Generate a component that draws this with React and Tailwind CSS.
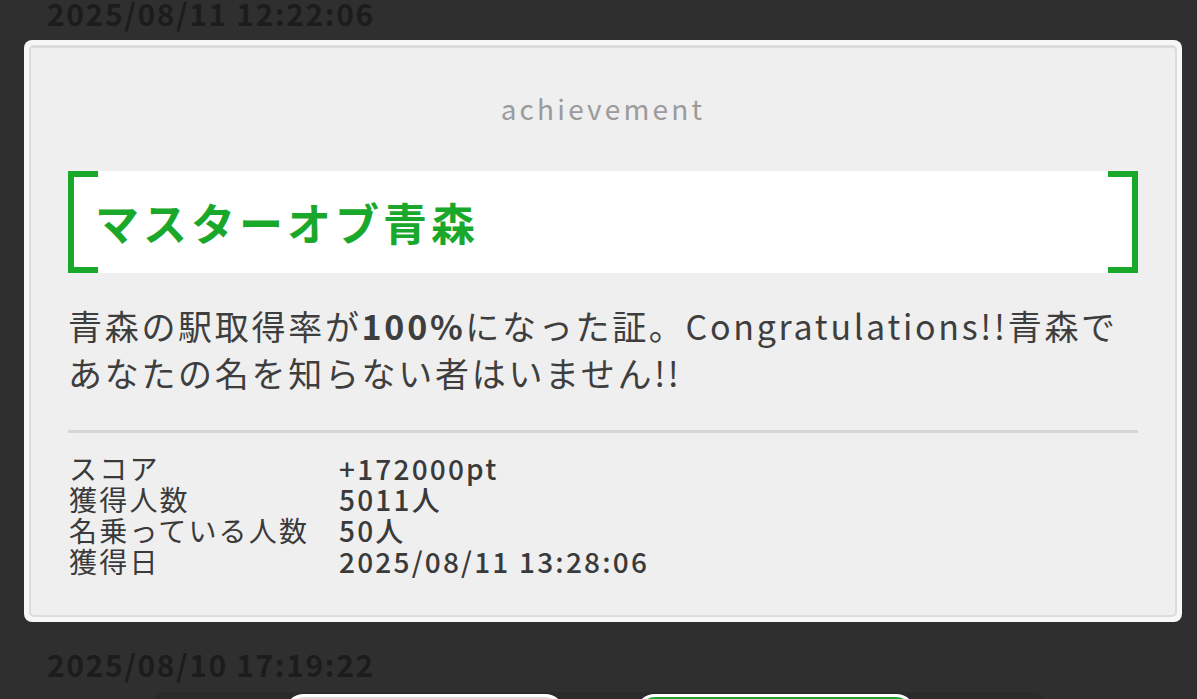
export default function App() {
  const font = { fontFamily: '"Noto Sans CJK JP", "Noto Sans", sans-serif' };
  const stats = [
    ["スコア", "+172000pt"],
    ["獲得人数", "5011人"],
    ["名乗っている人数", "50人"],
    ["獲得日", "2025/08/11 13:28:06"],
  ];
  return (
    <div className="w-[1197px] h-[699px] overflow-hidden bg-[#2f2f2f]" style={font}>
      <div className="pl-[47px] -mt-[7px] h-[47px] text-[30px] leading-[40px] font-bold text-[#1c1c1c] tracking-[1.6px]">
        2025/08/11 12:22:06
      </div>

      <div className="mx-[24px] w-[1158px] h-[582px] rounded-[8px] bg-[#f7f7f7] p-[5px]">
        <div className="h-full rounded-[5px] border-2 border-t-[3px] border-[#dcdcdc] bg-[#efefef] px-[37px] pt-[45px]">
          <div className="text-center text-[28px] leading-[30px] text-[#9b9b9b] tracking-[3.2px]">
            achievement
          </div>

          <div className="relative mt-[48px] h-[102px]">
            <div className="mx-[6px] h-full bg-white flex items-center pl-[21px]">
              <span className="text-[44px] leading-none font-bold text-[#1aa82b] tracking-[4px]">
                マスターオブ青森
              </span>
            </div>
            <div className="absolute left-0 top-0 bottom-0 w-[30px] border-l-[6px] border-y-[6px] border-[#1aa82b]" />
            <div className="absolute right-0 top-0 bottom-0 w-[30px] border-r-[6px] border-y-[6px] border-[#1aa82b]" />
          </div>

          <div className="mt-[29px] text-[34px] leading-[47px] text-[#3e3e3e] tracking-[2.7px]">
            <div className="whitespace-nowrap">
              青森の駅取得率が<span className="font-bold">100%</span>になった証。Congratulations!!青森で
            </div>
            <div className="whitespace-nowrap">あなたの名を知らない者はいません!!</div>
          </div>

          <div className="mt-[34px] h-[3px] bg-[#d6d6d6]" />

          <div className="mt-[20px] text-[28px] leading-[31px] text-[#3a3a3a]">
            {stats.map(([k, v]) => (
              <div key={k} className="flex h-[31px]">
                <div className="w-[271px] pl-[1px] tracking-[2.2px] whitespace-nowrap">{k}</div>
                <div className="font-medium tracking-[2.2px] whitespace-nowrap">{v}</div>
              </div>
            ))}
          </div>
        </div>
      </div>

      <div className="pl-[47px] mt-[22px] text-[30px] leading-[40px] font-bold text-[#1c1c1c] tracking-[1.6px]">
        2025/08/10 17:19:22
      </div>

      <div className="mx-[150px] mt-[8px] h-[40px] rounded-t-[16px] bg-[#2a2a2a] flex pl-[134px] gap-[70px] pt-[2px]">
        <div className="w-[281px] h-[40px] rounded-[20px] bg-[#dcdcdc] border-[3px] border-white" />
        <div className="w-[281px] h-[40px] rounded-[20px] bg-[#23a333] border-[3px] border-white" />
      </div>
    </div>
  );
}
